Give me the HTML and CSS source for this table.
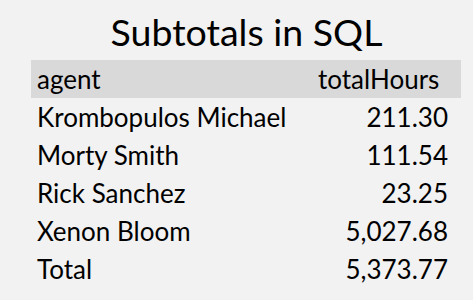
FILE: index.html
```html
<!DOCTYPE html>
<html>
<head>
<meta charset="utf-8">
<link rel="stylesheet" href="styles.css">
</head>
<body>
<div class="wrap">
  <h1 class="title">Subtotals in SQL</h1>
  <div class="table">
    <div class="row head"><span class="c1">agent</span><span class="c2">totalHours</span></div>
    <div class="row"><span class="c1">Krombopulos Michael</span><span class="c2 num">211.30</span></div>
    <div class="row"><span class="c1">Morty Smith</span><span class="c2 num">111.54</span></div>
    <div class="row"><span class="c1">Rick Sanchez</span><span class="c2 num">23.25</span></div>
    <div class="row"><span class="c1">Xenon Bloom</span><span class="c2 num">5,027.68</span></div>
    <div class="row"><span class="c1">Total</span><span class="c2 num">5,373.77</span></div>
  </div>
</div>
</body>
</html>
```
FILE: styles.css
```css
html, body {
  margin: 0;
  padding: 0;
  background: #f2f2f2;
  width: 473px;
  height: 300px;
  overflow: hidden;
}
body {
  font-family: Lato, "Open Sans", sans-serif;
  color: #000;
}
.wrap {
  margin-left: 31px;
  width: 430px;
}
.title {
  margin: 0;
  height: 58px;
  padding-top: 2px;
  font-weight: 400;
  font-size: 37.5px;
  line-height: 60px;
  text-align: center;
  padding-left: 1px;
}
.table {
  display: flex;
  flex-direction: column;
}
.row {
  display: grid;
  grid-template-columns: 287px 143px;
  height: 38px;
  line-height: 38px;
  font-size: 26px;
}
.head {
  background: #d9d9d9;
}
.c1 {
  padding-left: 6px;
}
.num {
  text-align: right;
  padding-right: 13px;
}
```
